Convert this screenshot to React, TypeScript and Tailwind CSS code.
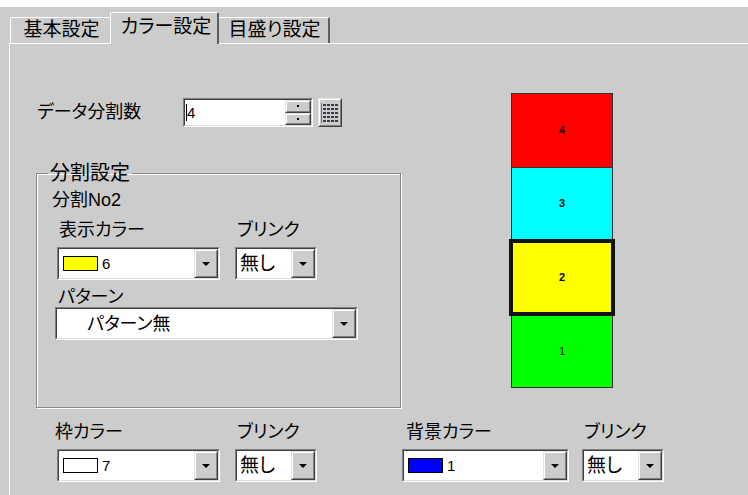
import React from "react";

const jp = "font-['Liberation_Sans','Noto_Sans_CJK_JP',sans-serif] [font-feature-settings:'palt']";

function Sunken({ className = "", children }: { className?: string; children?: React.ReactNode }) {
  return (
    <div className={`border border-t-[#808080] border-l-[#808080] border-r-white border-b-white ${className}`}>
      <div className="flex h-full w-full items-center border border-t-[#404040] border-l-[#404040] border-r-[#dcdcdc] border-b-[#dcdcdc] bg-white">
        {children}
      </div>
    </div>
  );
}

function Raised({ className = "", children }: { className?: string; children?: React.ReactNode }) {
  return (
    <div className={`border border-t-[#e4e4e4] border-l-[#e4e4e4] border-r-[#404040] border-b-[#404040] bg-[#cccccc] ${className}`}>
      <div className="flex h-full w-full items-center justify-center border border-t-white border-l-white border-r-[#808080] border-b-[#808080]">
        {children}
      </div>
    </div>
  );
}

function Arrow() {
  return <div className="h-0 w-0 border-x-[4px] border-t-[4px] border-x-transparent border-t-black" />;
}

function Combo({ width, children }: { width: string; children: React.ReactNode }) {
  return (
    <Sunken className={`h-[33px] ${width}`}>
      <div className="flex h-full flex-1 items-center overflow-hidden">{children}</div>
      <Raised className="h-full w-[24px]">
        <Arrow />
      </Raised>
    </Sunken>
  );
}

function ColorCombo({ color, value, width = "w-[163px]" }: { color: string; value: string; width?: string }) {
  return (
    <Combo width={width}>
      <div className="ml-[4px] h-[15px] w-[35px] border border-black" style={{ background: color }} />
      <span className="ml-[4px] text-[15px] leading-none">{value}</span>
    </Combo>
  );
}

function BlinkCombo() {
  return (
    <Combo width="w-[82px]">
      <span className="ml-[3px] text-[19px] leading-none">無し</span>
    </Combo>
  );
}

function Field({ label, labelOffset = "ml-[2px]", children }: { label: string; labelOffset?: string; children: React.ReactNode }) {
  return (
    <div className="flex flex-col">
      <span className={`text-[18px] leading-[20px] ${labelOffset}`}>{label}</span>
      <div className="mt-[7px]">{children}</div>
    </div>
  );
}

function GridIcon() {
  const cells = [];
  for (let r = 0; r < 5; r++) {
    for (let c = 0; c < 4; c++) {
      cells.push(<rect key={`${r}-${c}`} x={2 + c * 4} y={2 + r * 4} width={3} height={2} fill="#3a3a4a" />);
    }
  }
  return (
    <svg width="18" height="22" viewBox="0 0 18 22">
      <line x1="0.5" y1="1" x2="0.5" y2="21" stroke="#6a6ad8" />
      {cells}
    </svg>
  );
}

export default function App() {
  return (
    <div className={`h-[495px] w-[748px] overflow-hidden bg-[#cccccc] text-black ${jp}`}>
      <div className="h-[7px] bg-white" />

      {/* tabs */}
      <div className="flex h-[36px] items-end pl-[10px] text-[19px]">
        <div className="flex h-[26px] w-[100px] items-center justify-center rounded-tl-[2px] border-l border-t border-white pl-[2px]">
          基本設定
        </div>
        <div className="relative z-10 -mb-px flex h-[32px] w-[109px] items-center justify-center rounded-t-[2px] border-l border-r-2 border-t border-l-white border-r-[#606060] border-t-white bg-[#cccccc] pb-[3px] pl-[4px]">
          カラー設定
        </div>
        <div className="flex h-[26px] w-[111px] items-center justify-center rounded-tr-[2px] border-r-2 border-t border-r-[#606060] border-t-white pl-[2px]">
          目盛り設定
        </div>
      </div>

      {/* panel */}
      <div className="ml-[9px] h-[460px] border-l border-t border-white">
        <div className="flex">
          <div className="pl-[26px] pt-[54px]">
            <div className="flex h-[29px] items-center">
              <span className="w-[147px] pl-[1px] text-[18px]">データ分割数</span>
              <Sunken className="h-[29px] w-[130px]">
                <div className="flex h-full flex-1 items-center">
                  <div className="ml-[1px] h-[17px] w-px bg-black" />
                  <span className="text-[15px] leading-none">4</span>
                </div>
                <div className="flex h-full w-[26px] flex-col">
                  <Raised className="h-1/2 w-full">
                    <div className="h-[2px] w-[2px] bg-black" />
                  </Raised>
                  <Raised className="h-1/2 w-full">
                    <div className="h-[2px] w-[2px] bg-black" />
                  </Raised>
                </div>
              </Sunken>
              <Raised className="ml-[5px] h-[29px] w-[24px] bg-[#b4b4b4]">
                <GridIcon />
              </Raised>
            </div>

            <fieldset className="mt-[36px] h-[245px] w-[365px] border border-[#888888] shadow-[inset_1px_1px_0_#ffffff,1px_1px_0_#ffffff]">
              <legend className="ml-[11px] px-[2px] text-[20px] leading-[20px]">分割設定</legend>
              <div className="flex flex-col pl-[20px]">
                <span className="-ml-[5px] mt-[7px] text-[18px] leading-[20px]">分割No2</span>
                <div className="mt-[10px] flex gap-[15px]">
                  <Field label="表示カラー" labelOffset="ml-[2px]">
                    <ColorCombo color="#ffff00" value="6" />
                  </Field>
                  <Field label="ブリンク">
                    <BlinkCombo />
                  </Field>
                </div>
                <span className="ml-[1px] mt-[7px] text-[18px] leading-[20px]">パターン</span>
                <div className="-ml-[2px]">
                  <Combo width="w-[303px]">
                    <span className="ml-[30px] text-[18px] leading-none">パターン無</span>
                  </Combo>
                </div>
              </div>
            </fieldset>
          </div>

          {/* chart */}
          <div className="ml-[108px] flex w-[106px] flex-col items-center pt-[49px] text-[11px] font-bold">
            <div className="flex h-[75px] w-[102px] items-center justify-center border border-[#333333] bg-[#ff0000]">4</div>
            <div className="flex h-[71px] w-[102px] items-center justify-center border-x border-[#333333] bg-[#00ffff]">3</div>
            <div className="flex h-[77px] w-[106px] items-center justify-center border-4 border-[#111111] bg-[#ffff00]">2</div>
            <div className="flex h-[72px] w-[102px] items-center justify-center border-x border-b border-[#333333] bg-[#00ff00] font-normal">1</div>
          </div>
        </div>

        {/* bottom row */}
        <div className="mt-[14px] flex pl-[47px]">
          <div className="flex gap-[15px]">
            <Field label="枠カラー" labelOffset="-ml-[2px]">
              <ColorCombo color="#ffffff" value="7" />
            </Field>
            <Field label="ブリンク">
              <BlinkCombo />
            </Field>
          </div>
          <div className="ml-[85px] flex gap-[13px]">
            <Field label="背景カラー" labelOffset="ml-[4px]">
              <ColorCombo color="#0000ff" value="1" width="w-[167px]" />
            </Field>
            <Field label="ブリンク">
              <BlinkCombo />
            </Field>
          </div>
        </div>
      </div>
    </div>
  );
}
